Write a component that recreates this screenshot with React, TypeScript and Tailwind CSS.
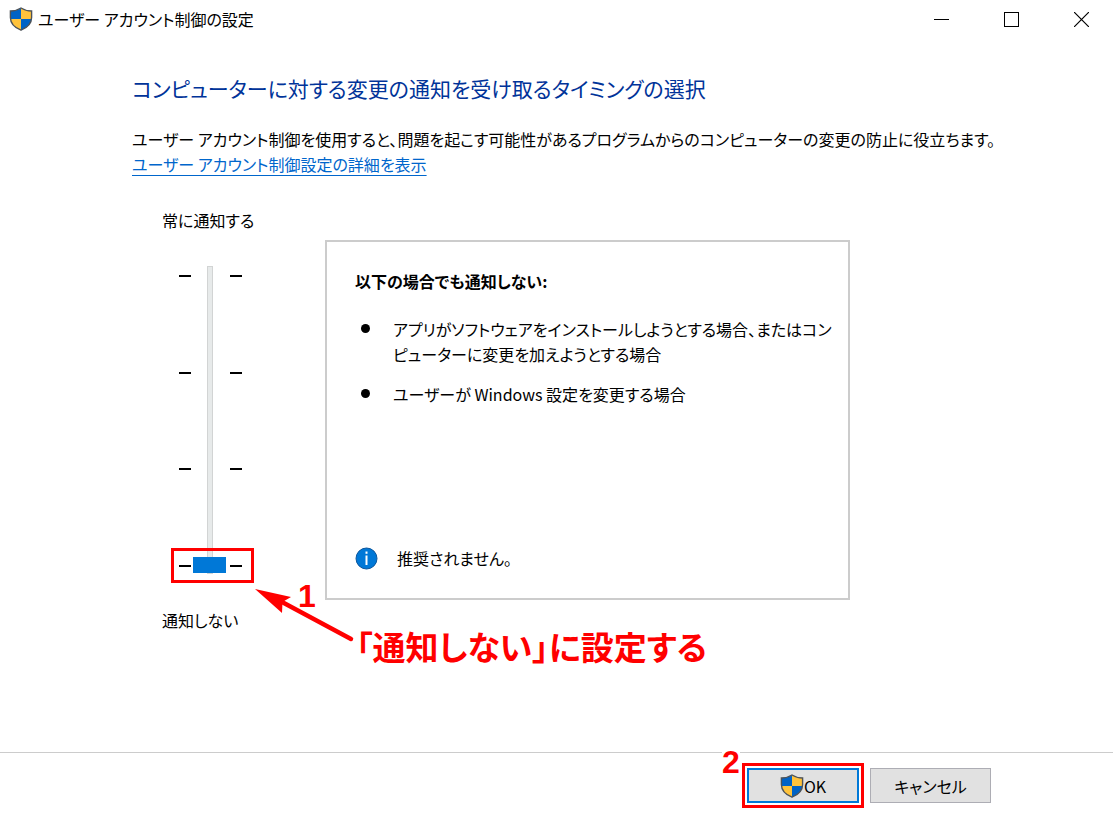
import { useState } from 'react';

const LEVELS = ['常に通知する', '変更時に通知する', '暗転せずに通知する', '通知しない'];

const CONDITIONS = [
  'アプリがソフトウェアをインストールしようとする場合、またはコンピューターに変更を加えようとする場合',
  'ユーザーが Windows 設定を変更する場合',
];

function Shield() {
  return (
    <svg className="h-6 w-6 shrink-0" viewBox="0 0 24 24" aria-hidden="true">
      <path d="M12 1.2C9.2 3 5 4 1.5 4V12H12Z" fill="#0063c6" />
      <path d="M12 1.2C14.8 3 19 4 22.5 4V12H12Z" fill="#ffc33c" />
      <path d="M1.5 12C2 17 7 21 12 23.2V12Z" fill="#ffc33c" />
      <path d="M22.5 12C22 17 17 21 12 23.2V12Z" fill="#0063c6" />
      <path
        d="M12 1C9 3 5 4 1.4 4V10.5C1.4 17 6.5 21 12 23.2C17.5 21 22.6 17 22.6 10.5V4C19 4 15 3 12 1Z"
        fill="none"
        stroke="#4d5358"
        strokeWidth="1.4"
      />
    </svg>
  );
}

function TitleBar() {
  return (
    <header className="flex h-[38px] items-center justify-between pl-[9px] pr-6">
      <div className="flex items-center gap-[5px]">
        <Shield />
        <span>ユーザー アカウント制御の設定</span>
      </div>
      <div className="flex gap-[55px]">
        <button type="button" aria-label="最小化">
          <svg width="15" height="15" viewBox="0 0 15 15" shapeRendering="crispEdges">
            <path d="M0 7.5H15" stroke="#000" />
          </svg>
        </button>
        <button type="button" aria-label="最大化">
          <svg width="15" height="15" viewBox="0 0 15 15" shapeRendering="crispEdges">
            <rect x="0.5" y="0.5" width="14" height="14" fill="none" stroke="#000" />
          </svg>
        </button>
        <button type="button" aria-label="閉じる">
          <svg width="15" height="15" viewBox="0 0 15 15">
            <path d="M0 0L15 15M15 0L0 15" stroke="#000" strokeWidth="1.2" />
          </svg>
        </button>
      </div>
    </header>
  );
}

function Ticks() {
  return (
    <div className="mt-[9px] flex h-[292px] flex-col justify-between">
      {LEVELS.map((level) => (
        <span key={level} className="h-[2px] w-3 bg-black" />
      ))}
    </div>
  );
}

function LevelSlider() {
  const [level, setLevel] = useState(3);

  return (
    <div className="relative w-[163px] shrink-0 pl-[30px]">
      <label htmlFor="level" className="block leading-6">
        常に通知する
      </label>
      <div className="mt-[34px] flex items-start pl-[17px]">
        <Ticks />
        <input
          id="level"
          type="range"
          min={0}
          max={3}
          value={level}
          onChange={(e) => setLevel(Number(e.target.value))}
          className="ml-[2px] mr-[3px] h-[308px] w-[34px] appearance-none bg-transparent [writing-mode:vertical-lr] [&::-webkit-slider-runnable-track]:h-full [&::-webkit-slider-runnable-track]:w-[6px] [&::-webkit-slider-runnable-track]:border [&::-webkit-slider-runnable-track]:border-[#d2d4d4] [&::-webkit-slider-runnable-track]:bg-[#e7eaea] [&::-webkit-slider-thumb]:ml-[-15px] [&::-webkit-slider-thumb]:h-4 [&::-webkit-slider-thumb]:w-[33px] [&::-webkit-slider-thumb]:appearance-none [&::-webkit-slider-thumb]:bg-[#0078d7]"
        />
        <Ticks />
      </div>
      <p className="mt-[34px] leading-6">通知しない</p>

      {/* Step 1 callout */}
      <div className="absolute left-[39px] top-[340px] h-[35px] w-[83px] border-[3px] border-[#ff0000]" />
      <svg className="absolute left-[122px] top-[380px]" width="102" height="56" viewBox="0 0 102 56">
        <path d="M1 1L37 9L28.500 14L28 25Z" fill="#ff0000" />
        <path d="M28 14L97 51" stroke="#ff0000" strokeWidth="4.5" strokeLinecap="round" />
      </svg>
      <span className="absolute left-[166px] top-[370px] font-['Liberation_Sans'] text-[32px] font-bold leading-[36px] text-[#ff0000]">
        1
      </span>
      <strong className="absolute left-[224px] top-[414px] whitespace-nowrap text-[33px] font-bold leading-[48px] text-[#ff0000]">
        「通知しない」に設定する
      </strong>
    </div>
  );
}

function Description() {
  return (
    <section className="mt-8 flex h-[360px] min-w-0 flex-1 flex-col justify-between border-2 border-[#cccccc] pb-7 pl-7 pr-3 pt-[27px]">
      <div>
        <h2 className="font-bold leading-6">以下の場合でも通知しない:</h2>
        <ul className="mt-6 space-y-[15px]">
          {CONDITIONS.map((text) => (
            <li key={text} className="flex gap-[23px] leading-[25px]">
              <span className="ml-[6px] mt-[7px] h-[9px] w-[9px] shrink-0 rounded-full bg-black" />
              <span>{text}</span>
            </li>
          ))}
        </ul>
      </div>
      <div className="flex items-center gap-[19px]">
        <svg width="23" height="23" viewBox="0 0 23 23" aria-hidden="true">
          <circle cx="11.5" cy="11.5" r="10.500" fill="#0078d7" stroke="#0a559c" />
          <path d="M11.500 8.500V18" stroke="#fff" strokeWidth="2" />
          <path d="M11.500 4.500V6.800" stroke="#fff" strokeWidth="2" />
        </svg>
        <p>推奨されません。</p>
      </div>
    </section>
  );
}

export default function App() {
  return (
    <div className="flex min-h-screen flex-col bg-white font-['Noto_Sans_CJK_JP',sans-serif] text-base text-black [font-feature-settings:'palt']">
      <TitleBar />
      <main className="flex-1 pl-[132px] pr-10 pt-8">
        <h1 className="text-[21px] leading-9 text-[#003399]">
          コンピューターに対する変更の通知を受け取るタイミングの選択
        </h1>
        <p className="mt-[21px] leading-[25px]">
          ユーザー アカウント制御を使用すると、問題を起こす可能性があるプログラムからのコンピューターの変更の防止に役立ちます。
        </p>
        <a href="#details" className="leading-[25px] text-[#0066cc] underline underline-offset-4">
          ユーザー アカウント制御設定の詳細を表示
        </a>
        <div className="mt-[31px] flex max-w-[718px] gap-[30px]">
          <LevelSlider />
          <Description />
        </div>
      </main>
      <footer className="flex justify-end gap-[6px] border-t border-[#cccccc] pb-[14px] pr-[122px] pt-[10px]">
        <div className="relative border-[3px] border-[#ff0000] p-[2px]">
          <span className="absolute -left-[23px] -top-[22px] bg-white font-['Liberation_Sans'] text-[32px] font-bold leading-[36px] text-[#ff0000]">
            2
          </span>
          <button
            type="button"
            className="flex h-[35px] w-[112px] items-center justify-center border-2 border-[#0078d7] bg-[#e1e1e1]"
          >
            <Shield />
            OK
          </button>
        </div>
        <button type="button" className="mt-[5px] h-[35px] w-[121px] border border-[#adadb4] bg-[#e1e1e1]">
          キャンセル
        </button>
      </footer>
    </div>
  );
}
